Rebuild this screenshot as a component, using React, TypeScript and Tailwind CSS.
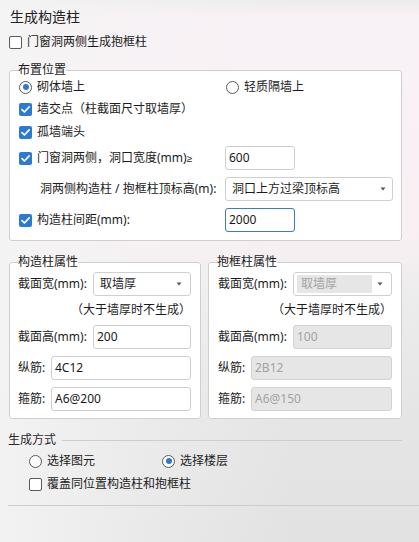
import React from "react";

function Check({ checked }: { checked?: boolean }) {
  return checked ? (
    <span className="w-[13px] h-[13px] rounded-[2px] bg-[#2b7bd4] flex items-center justify-center shrink-0">
      <svg width="11" height="11" viewBox="0 0 11 11">
        <path d="M2 5.6 L4.4 8 L9.2 2.9" stroke="white" strokeWidth="1.7" fill="none" strokeLinecap="round" strokeLinejoin="round" />
      </svg>
    </span>
  ) : (
    <span className="w-[13px] h-[13px] rounded-[2px] border border-[#5a5a5a] bg-white shrink-0" />
  );
}

function Radio({ checked }: { checked?: boolean }) {
  return (
    <span className="w-[13px] h-[13px] rounded-full border border-[#5a5a5a] bg-white flex items-center justify-center shrink-0">
      {checked && <span className="w-[6px] h-[6px] rounded-full bg-[#2b7bd4]" />}
    </span>
  );
}

function Arrow() {
  return (
    <svg width="6" height="4" viewBox="0 0 6 4" className="shrink-0">
      <path d="M0.5 0.5 L5.5 0.5 L3 3.5 Z" fill="#555" />
    </svg>
  );
}

function Input({ value, w, disabled, focused }: { value: string; w: string; disabled?: boolean; focused?: boolean }) {
  const cls = disabled
    ? "h-[24px] rounded-[3px] border border-[#d3d3d3] bg-[#e6e6e6] text-[#a3a3a3] flex items-center pl-[3px]"
    : focused
    ? "h-[24px] rounded-[3px] border border-[#3d7bc4] bg-white text-[#1a1a1a] flex items-center pl-[3px]"
    : "h-[24px] rounded-[3px] border border-[#cfcfcf] bg-white text-[#1a1a1a] flex items-center pl-[3px]";
  return <div className={`${cls} ${w}`}>{value}</div>;
}

export default function App() {
  return (
    <div className="w-[419px] h-[542px] overflow-hidden text-[12px] text-[#1c1c1c] font-['Noto_Sans','Noto_Sans_CJK_SC',sans-serif] bg-[linear-gradient(90deg,rgba(244,244,244,0.9)_0%,rgba(246,244,245,0.4)_35%,rgba(255,255,255,0)_70%),linear-gradient(180deg,#ececec_0px,#f8f1f5_16px,#f9f0f4_230px,#ececec_300px,#e5e5e5_420px,#e2e2e2_100%)]">
      <div className="pl-[10px] pt-[7px] text-[14px] leading-[20px] text-[#202020]">生成构造柱</div>
      <div className="h-[24px] mt-[3px] pl-[9px] flex items-center gap-[5px]">
        <Check />
        <span>门窗洞两侧生成抱框柱</span>
      </div>

      <fieldset className="ml-[9px] mt-[8px] w-[393px] border border-[#cfcfcf] rounded-[3px] bg-white pl-[9px] pb-[4px]">
        <legend className="ml-[-1px] leading-[16px]">布置位置</legend>
        <div className="h-[18px] flex items-center">
          <div className="w-[207px] flex items-center gap-[5px]">
            <Radio checked />
            <span>砌体墙上</span>
          </div>
          <div className="flex items-center gap-[5px]">
            <Radio />
            <span>轻质隔墙上</span>
          </div>
        </div>
        <div className="h-[26px] flex items-center gap-[5px]">
          <Check checked />
          <span>墙交点（柱截面尺寸取墙厚）</span>
        </div>
        <div className="h-[20px] flex items-center gap-[5px]">
          <Check checked />
          <span>孤墙端头</span>
        </div>
        <div className="h-[32px] flex items-center">
          <div className="w-[206px] flex items-center gap-[5px]">
            <Check checked />
            <span>
              门窗洞两侧，洞口宽度(mm)
              <span className="font-['Liberation_Sans',sans-serif] text-[10px]">≥</span>
            </span>
          </div>
          <Input value="600" w="w-[70px]" />
        </div>
        <div className="h-[30px] flex items-center">
          <div className="w-[206px] pl-[21px]">洞两侧构造柱 / 抱框柱顶标高(m):</div>
          <div className="w-[168px] h-[24px] rounded-[3px] border border-[#cfcfcf] bg-white flex items-center pl-[6px] pr-[6px] justify-between">
            <span>洞口上方过梁顶标高</span>
            <Arrow />
          </div>
        </div>
        <div className="h-[32px] flex items-center">
          <div className="w-[206px] flex items-center gap-[5px]">
            <Check checked />
            <span>构造柱间距(mm):</span>
          </div>
          <Input value="2000" w="w-[70px]" focused />
        </div>
      </fieldset>

      <div className="ml-[9px] mt-[13px] w-[393px] flex gap-[7px]">
        <fieldset className="w-[192px] border border-[#cfcfcf] rounded-[3px] bg-white pl-[8px] pr-[9px] pb-[4px]">
          <legend className="leading-[16px]">构造柱属性</legend>
          <div className="h-[28px] flex items-center">
            <div className="w-[75px]">截面宽(mm):</div>
            <div className="w-[98px] h-[24px] rounded-[3px] border border-[#cfcfcf] bg-white flex items-center pl-[6px] pr-[8px] justify-between">
              <span>取墙厚</span>
              <Arrow />
            </div>
          </div>
          <div className="h-[24px] flex items-center justify-end">（大于墙厚时不生成）</div>
          <div className="h-[30px] flex items-center">
            <div className="w-[75px]">截面高(mm):</div>
            <Input value="200" w="w-[98px]" />
          </div>
          <div className="h-[31px] flex items-center">
            <div className="w-[33px]">纵筋:</div>
            <Input value="4C12" w="w-[140px]" />
          </div>
          <div className="h-[31px] flex items-center">
            <div className="w-[33px]">箍筋:</div>
            <Input value="A6@200" w="w-[140px]" />
          </div>
        </fieldset>

        <fieldset className="w-[194px] border border-[#cfcfcf] rounded-[3px] bg-white pl-[9px] pr-[9px] pb-[4px]">
          <legend className="ml-[-1px] leading-[16px]">抱框柱属性</legend>
          <div className="h-[28px] flex items-center">
            <div className="w-[75px]">截面宽(mm):</div>
            <div className="w-[99px] h-[24px] rounded-[3px] border border-[#cfcfcf] bg-white flex items-center pl-[3px] pr-[8px] gap-[5px]">
              <div className="w-[81px] h-[18px] bg-[#e6e6e6] text-[#a3a3a3] flex items-center pl-[4px]">取墙厚</div>
              <Arrow />
            </div>
          </div>
          <div className="h-[24px] flex items-center justify-end">（大于墙厚时不生成）</div>
          <div className="h-[30px] flex items-center">
            <div className="w-[75px]">截面高(mm):</div>
            <Input value="100" w="w-[99px]" disabled />
          </div>
          <div className="h-[31px] flex items-center">
            <div className="w-[33px]">纵筋:</div>
            <Input value="2B12" w="w-[141px]" disabled />
          </div>
          <div className="h-[31px] flex items-center">
            <div className="w-[33px]">箍筋:</div>
            <Input value="A6@150" w="w-[141px]" disabled />
          </div>
        </fieldset>
      </div>

      <div className="mt-[11px] h-[20px] flex items-center pl-[8px] pr-[17px]">
        <span className="text-[#2a2a2a]">生成方式</span>
        <div className="flex-1 ml-[6px] h-px bg-[#cdcdcd]" />
      </div>
      <div className="h-[22px] flex items-center pl-[29px]">
        <div className="w-[133px] flex items-center gap-[5px]">
          <Radio />
          <span>选择图元</span>
        </div>
        <div className="flex items-center gap-[5px]">
          <Radio checked />
          <span>选择楼层</span>
        </div>
      </div>
      <div className="h-[24px] flex items-center pl-[29px] gap-[5px]">
        <Check />
        <span>覆盖同位置构造柱和抱框柱</span>
      </div>
      <div className="mt-[9px] ml-[8px] h-px bg-[#cdcdcd]" />
    </div>
  );
}
